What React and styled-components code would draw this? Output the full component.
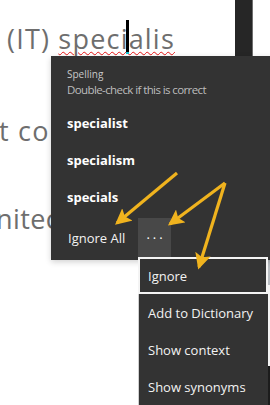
import React from 'react'
import styled, { createGlobalStyle } from 'styled-components'

const GlobalStyle = createGlobalStyle`
  html, body {
    margin: 0;
    padding: 0;
    background: #fff;
  }
  body {
    font-family: "Open Sans", "Noto Sans", sans-serif;
  }
`

const suggestions = ['specialist', 'specialism', 'specials']
const moreItems = ['Ignore', 'Add to Dictionary', 'Show context', 'Show synonyms']

const App = () => {
  return (
    <Page>
      <GlobalStyle />
      <Doc>
        <DocLine pTop={24} pLeft={7}>
          (IT) <Misspelt>specialis</Misspelt>
        </DocLine>
        <DocLine pTop={62} pLeft={-1}>t co</DocLine>
        <DocLine pTop={58} pLeft={-4} pTight>nitec</DocLine>
      </Doc>

      <SideBar />
      <Caret />
      <EdgeStrip>
        <span className="grey" />
        <span className="white" />
        <span className="dark" />
      </EdgeStrip>

      <Menu>
        <Header>
          <Kicker>Spelling</Kicker>
          <Hint>Double-check if this is correct</Hint>
        </Header>
        {suggestions.map((s) => (
          <Suggestion key={s}>{s}</Suggestion>
        ))}
        <Footer>
          <IgnoreAll>Ignore All</IgnoreAll>
          <DotsButton>···</DotsButton>
        </Footer>
      </Menu>

      <SubMenu>
        {moreItems.map((item, i) => (
          <SubItem key={item} pActive={i === 0}>{item}</SubItem>
        ))}
      </SubMenu>

      <Arrows width="270" height="405" viewBox="0 0 270 405">
        <defs>
          <marker id="head" markerWidth="5" markerHeight="5" refX="4.2" refY="2.5" orient="auto" markerUnits="strokeWidth">
            <path d="M0,0 L5,2.5 L0,5 L1,2.5 Z" fill="#f0b31e" />
          </marker>
        </defs>
        <line x1="177" y1="173" x2="117" y2="223" stroke="#f0b31e" strokeWidth="3.2" markerEnd="url(#head)" />
        <line x1="225" y1="183" x2="170" y2="224" stroke="#f0b31e" strokeWidth="3.2" markerEnd="url(#head)" />
        <line x1="225" y1="183" x2="199" y2="267" stroke="#f0b31e" strokeWidth="3.2" markerEnd="url(#head)" />
      </Arrows>
    </Page>
  )
}

export default App

//================================STYLES===============================
const Page = styled.div`
    position: relative;
    width: 270px;
    height: 405px;
    overflow: hidden;
    background: #fff;
`

const Doc = styled.div`
    display: flex;
    flex-direction: column;
`

const DocLine = styled.div`
    margin-top: ${(p) => p.pTop}px;
    margin-left: ${(p) => p.pLeft}px;
    font-size: 27px;
    line-height: 30px;
    letter-spacing: ${(p) => (p.pTight ? 0.4 : 1.2)}px;
    color: #6e6e6e;
    white-space: nowrap;
`

const Misspelt = styled.span`
    text-decoration-line: underline;
    text-decoration-style: wavy;
    text-decoration-color: #e41414;
    text-decoration-thickness: 1.2px;
    text-underline-offset: 2px;
`

const SideBar = styled.div`
    position: absolute;
    left: 235px;
    top: 0;
    width: 17px;
    height: 56px;
    background: #262626;
    border-right: 1px solid #6f6f6f;
`

const Caret = styled.div`
    position: absolute;
    left: 126px;
    top: 20px;
    width: 3px;
    height: 34px;
    background: #000;
    &::after{
        content: '';
        position: absolute;
        left: 0;
        bottom: 0;
        width: 3px;
        height: 2px;
        background: #19c3d4;
    }
`

const EdgeStrip = styled.div`
    position: absolute;
    left: 268px;
    top: 260px;
    width: 2px;
    height: 145px;
    display: flex;
    flex-direction: column;
    span{ display: block; }
    .grey{ height: 25px; background: #b9bdc2; }
    .white{ height: 81px; background: #f4f4f4; }
    .dark{ flex: 1; background: #1c1c1c; }
`

const Menu = styled.div`
    position: absolute;
    left: 51px;
    top: 56px;
    width: 230px;
    height: 204px;
    box-sizing: border-box;
    padding: 11px 0 0 16px;
    background: #333333;
    box-shadow: 0 2px 6px rgba(0,0,0,0.18);
    display: flex;
    flex-direction: column;
    font-family: "Open Sans", "Noto Sans", sans-serif;
`

const Header = styled.div`
    display: flex;
    flex-direction: column;
    margin-bottom: 6px;
`

const Kicker = styled.div`
    font-size: 10px;
    line-height: 14px;
    color: #c8c8c8;
`

const Hint = styled.div`
    font-size: 11.5px;
    line-height: 17px;
    letter-spacing: -0.6px;
    color: #bdbdbd;
    white-space: nowrap;
`

const Suggestion = styled.div`
    height: 37px;
    display: flex;
    align-items: center;
    font-size: 13px;
    font-weight: 700;
    color: #fff;
`

const Footer = styled.div`
    margin-top: 3px;
    height: 40px;
    display: flex;
    align-items: center;
`

const IgnoreAll = styled.div`
    width: 70px;
    padding-left: 1px;
    font-size: 13px;
    color: #f2f2f2;
`

const DotsButton = styled.div`
    width: 33px;
    height: 40px;
    display: flex;
    align-items: center;
    justify-content: center;
    background: #484848;
    color: #fff;
    font-size: 13px;
    letter-spacing: 3px;
    text-indent: 3px;
`

const SubMenu = styled.div`
    position: absolute;
    left: 138px;
    top: 257px;
    width: 130px;
    height: 150px;
    background: #333333;
    border-left: 1px solid #cfcfcf;
    box-sizing: border-box;
    display: flex;
    flex-direction: column;
`

const SubItem = styled.div`
    height: 37px;
    flex-shrink: 0;
    box-sizing: border-box;
    display: flex;
    align-items: center;
    padding-left: ${(p) => (p.pActive ? 8 : 9)}px;
    margin-left: ${(p) => (p.pActive ? -1 : 0)}px;
    border: ${(p) => (p.pActive ? '2px solid #f4f4f4' : 'none')};
    font-size: 13px;
    color: #f2f2f2;
    white-space: nowrap;
`

const Arrows = styled.svg`
    position: absolute;
    left: 0;
    top: 0;
    pointer-events: none;
`
